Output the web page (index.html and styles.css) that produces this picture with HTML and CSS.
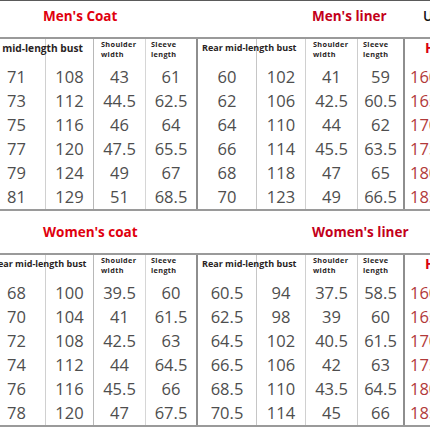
FILE: index.html
```html
<!DOCTYPE html>
<html>
<head>
<meta charset="utf-8">
<link rel="stylesheet" href="styles.css">
</head>
<body>
<div class="topline"></div>
<div class="sheet">
  <section class="block">
    <div class="titles">
      <div class="ttl ttl-a">Men's Coat</div>
      <div class="ttl ttl-b">Men's liner</div>
      <div class="ttl ttl-c">Unisex</div>
    </div>
    <div class="grid">
      <div class="hd hd-bust hd-big">Rear mid-length bust</div><div class="hd"></div><div class="hd hd-sm hd-sh">Shoulder<br>width</div><div class="hd hd-sm hd-sl">Sleeve<br>length</div>
      <div class="hd hd-bust">Rear mid-length bust</div><div class="hd"></div><div class="hd hd-sm hd-sh">Shoulder<br>width</div><div class="hd hd-sm hd-sl">Sleeve<br>length</div>
      <div class="hd hd-h">Height</div>

      <div class="v">71</div><div class="v">108</div><div class="v">43</div><div class="v">61</div><div class="v">60</div><div class="v">102</div><div class="v">41</div><div class="v">59</div><div class="v h">160</div>
      <div class="v">73</div><div class="v">112</div><div class="v">44.5</div><div class="v">62.5</div><div class="v">62</div><div class="v">106</div><div class="v">42.5</div><div class="v">60.5</div><div class="v h">165</div>
      <div class="v">75</div><div class="v">116</div><div class="v">46</div><div class="v">64</div><div class="v">64</div><div class="v">110</div><div class="v">44</div><div class="v">62</div><div class="v h">170</div>
      <div class="v">77</div><div class="v">120</div><div class="v">47.5</div><div class="v">65.5</div><div class="v">66</div><div class="v">114</div><div class="v">45.5</div><div class="v">63.5</div><div class="v h">175</div>
      <div class="v">79</div><div class="v">124</div><div class="v">49</div><div class="v">67</div><div class="v">68</div><div class="v">118</div><div class="v">47</div><div class="v">65</div><div class="v h">180</div>
      <div class="v">81</div><div class="v">129</div><div class="v">51</div><div class="v">68.5</div><div class="v">70</div><div class="v">123</div><div class="v">49</div><div class="v">66.5</div><div class="v h">185</div>
    </div>
  </section>

  <section class="block">
    <div class="titles">
      <div class="ttl ttl-a">Women's coat</div>
      <div class="ttl ttl-b">Women's liner</div>
      <div class="ttl ttl-c"></div>
    </div>
    <div class="grid">
      <div class="hd hd-bust">Rear mid-length bust</div><div class="hd"></div><div class="hd hd-sm hd-sh">Shoulder<br>width</div><div class="hd hd-sm hd-sl">Sleeve<br>length</div>
      <div class="hd hd-bust">Rear mid-length bust</div><div class="hd"></div><div class="hd hd-sm hd-sh">Shoulder<br>width</div><div class="hd hd-sm hd-sl">Sleeve<br>length</div>
      <div class="hd hd-h">Height</div>

      <div class="v">68</div><div class="v">100</div><div class="v">39.5</div><div class="v">60</div><div class="v">60.5</div><div class="v">94</div><div class="v">37.5</div><div class="v">58.5</div><div class="v h">160</div>
      <div class="v">70</div><div class="v">104</div><div class="v">41</div><div class="v">61.5</div><div class="v">62.5</div><div class="v">98</div><div class="v">39</div><div class="v">60</div><div class="v h">165</div>
      <div class="v">72</div><div class="v">108</div><div class="v">42.5</div><div class="v">63</div><div class="v">64.5</div><div class="v">102</div><div class="v">40.5</div><div class="v">61.5</div><div class="v h">170</div>
      <div class="v">74</div><div class="v">112</div><div class="v">44</div><div class="v">64.5</div><div class="v">66.5</div><div class="v">106</div><div class="v">42</div><div class="v">63</div><div class="v h">175</div>
      <div class="v">76</div><div class="v">116</div><div class="v">45.5</div><div class="v">66</div><div class="v">68.5</div><div class="v">110</div><div class="v">43.5</div><div class="v">64.5</div><div class="v h">180</div>
      <div class="v">78</div><div class="v">120</div><div class="v">47</div><div class="v">67.5</div><div class="v">70.5</div><div class="v">114</div><div class="v">45</div><div class="v">66</div><div class="v h">185</div>
    </div>
  </section>
</div>
</body>
</html>
```

FILE: styles.css
```css
html, body {
  margin: 0;
  padding: 0;
  background: #ffffff;
}
body {
  width: 430px;
  height: 430px;
  overflow: hidden;
  font-family: "Open Sans", "Noto Sans", "Liberation Sans", sans-serif;
}
.topline {
  height: 1px;
  background: #5a5a5a;
}
.sheet {
  margin-top: -6px;
  margin-left: -12px;
  width: 507px;
}
.titles {
  display: grid;
  grid-template-columns: 210px 207px 90px;
  height: 42px;
}
.ttl {
  font-weight: 700;
  font-size: 13.5px;
  line-height: 42px;
  white-space: nowrap;
}
.ttl-a {
  color: #e0000e;
  padding-left: 55px;
}
.ttl-b {
  color: #c3001a;
  padding-left: 114px;
}
.ttl-c {
  color: #111111;
  font-weight: 600;
  padding-left: 18px;
}
.grid {
  display: grid;
  grid-template-columns: 58px 48px 52px 52px 59px 49px 52px 47px 90px;
  grid-template-rows: 26px repeat(6, 24px);
  border-top: 2px solid #9a9a9a;
  border-bottom: 2px solid #9a9a9a;
}
.grid > div {
  box-sizing: border-box;
}
.grid > :nth-child(9n+1) { border-right: 1px solid #d0d0d0; }
.grid > :nth-child(9n+2) { border-right: 1px solid #b8b8b8; }
.grid > :nth-child(9n+3) { border-right: 1px solid #d6d6d6; }
.grid > :nth-child(9n+4) { border-right: 2px solid #8e8e8e; }
.grid > :nth-child(9n+5) { border-right: 1px solid #c6c6c6; }
.grid > :nth-child(9n+6) { border-right: 1px solid #d0d0d0; }
.grid > :nth-child(9n+7) { border-right: 1px solid #cdcdcd; }
.grid > :nth-child(9n+8) { border-right: 2px solid #8e8e8e; }

.hd {
  color: #2a1f1f;
  font-weight: 700;
  white-space: nowrap;
}
.hd-bust {
  font-size: 9px;
  line-height: 12px;
  padding: 3px 0 0 4px;
}
.hd-big {
  font-size: 10.2px;
  margin-left: -16px;
}
.hd-sm {
  font-size: 7.3px;
  line-height: 9.5px;
  letter-spacing: 0.35px;
  padding-top: 1px;
}
.hd-sh {
  padding-left: 7px;
}
.hd-sl {
  padding-left: 5px;
}
.hd-h {
  color: #d8000f;
  font-size: 14px;
  line-height: 18px;
  padding-left: 20px;
}
.v {
  color: #4e4e4e;
  font-size: 16.5px;
  line-height: 24px;
  text-align: center;
}
.v.h {
  color: #b23a3a;
  text-align: left;
  padding-left: 5px;
}
```
